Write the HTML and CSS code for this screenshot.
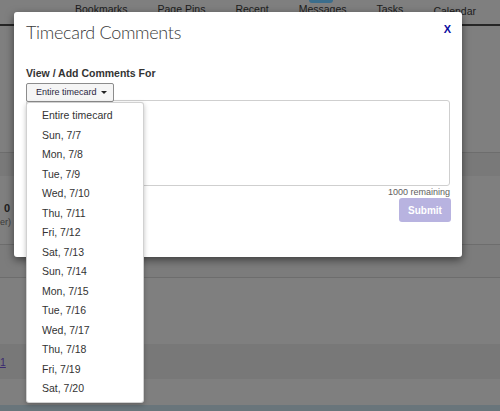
FILE: index.html
```html
<!DOCTYPE html>
<html>
<head>
<meta charset="utf-8">
<link rel="stylesheet" href="styles.css">
</head>
<body>
<div class="page">
  <nav class="nav">
    <span class="nav-item">Bookmarks</span>
    <span class="nav-item">Page Pins</span>
    <span class="nav-item">Recent</span>
    <span class="nav-item has-badge">Messages<span class="badge"></span></span>
    <span class="nav-item">Tasks</span>
    <span class="nav-item cal">Calendar</span>
  </nav>
  <div class="row row1"></div>
  <div class="band band1"></div>
  <div class="row row3">
    <div class="total">0</div>
    <div class="note">er)</div>
  </div>
  <div class="row row4"></div>
  <div class="row row5"></div>
  <div class="band band2"><a class="link" href="#">1</a></div>
  <div class="row row7"></div>
  <div class="footer"></div>
</div>

<div class="modal">
  <div class="modal-header">
    <h1 class="modal-title">Timecard Comments</h1>
    <span class="close">X</span>
  </div>
  <div class="label">View / Add Comments For</div>
  <div class="dropdown">
    <button class="dd-btn"><span>Entire timecard</span><span class="caret"></span></button>
    <ul class="dd-menu">
      <li>Entire timecard</li>
      <li>Sun, 7/7</li>
      <li>Mon, 7/8</li>
      <li>Tue, 7/9</li>
      <li>Wed, 7/10</li>
      <li>Thu, 7/11</li>
      <li>Fri, 7/12</li>
      <li>Sat, 7/13</li>
      <li>Sun, 7/14</li>
      <li>Mon, 7/15</li>
      <li>Tue, 7/16</li>
      <li>Wed, 7/17</li>
      <li>Thu, 7/18</li>
      <li>Fri, 7/19</li>
      <li>Sat, 7/20</li>
    </ul>
  </div>
  <textarea class="comment"></textarea>
  <div class="remaining">1000 remaining</div>
  <button class="submit">Submit</button>
</div>
</body>
</html>
```
FILE: styles.css
```css
* { box-sizing: border-box; }
html, body { margin: 0; padding: 0; }
body {
  width: 500px;
  height: 411px;
  overflow: hidden;
  background: #7f7f7f;
  font-family: "Liberation Sans", Arial, sans-serif;
  position: relative;
}
.page { display: flex; flex-direction: column; height: 411px; }
.nav {
  height: 26px;
  border-bottom: 2px solid #262626;
  display: flex;
  gap: 30px;
  padding: 2px 0 0 75px;
  font-size: 10.5px;
  line-height: 14px;
  color: #1c1c1c;
}
.nav-item { position: relative; white-space: nowrap; }
.nav-item.cal { margin-top: 2px; }
.badge {
  position: absolute;
  left: 10px;
  top: -2px;
  width: 24px;
  height: 3px;
  background: #3a6d8c;
  border-radius: 0 0 3px 3px;
}
.row { background: #7f7f7f; }
.row1 { height: 127px; border-bottom: 1px solid #6d6d6d; }
.band1 { height: 23px; background: #797979; }
.row3 { height: 69px; border-bottom: 1px solid #6d6d6d; padding-top: 25px; }
.row4 { height: 33px; border-bottom: 1px solid #6d6d6d; background: #7c7c7c; }
.row5 { height: 66px; }
.band2 { height: 35px; background: #787878; padding-top: 12px; }
.row7 { height: 26px; }
.footer { flex: 1; background: #69757b; }
.total { padding-left: 4px; font-size: 11px; line-height: 14px; color: #202020; font-weight: bold; }
.note { font-size: 9px; line-height: 12px; color: #3a3a3a; margin-top: 1px; white-space: nowrap; }
.link { display: block; width: 6px; font-size: 10.5px; color: #3b2a70; text-decoration: underline; line-height: 12px; }

.modal {
  position: absolute;
  left: 14px;
  top: 12px;
  width: 448px;
  height: 245px;
  background: #fff;
  border-radius: 3px;
  box-shadow: 0 3px 8px rgba(0,0,0,0.5);
  padding: 8px 12px 0 12px;
}
.modal-header { display: flex; justify-content: space-between; align-items: flex-start; }
.modal-title {
  margin: 0;
  font-family: Lato, "Open Sans", sans-serif;
  font-weight: 300;
  font-size: 18px;
  letter-spacing: -0.3px;
  line-height: 24px;
  color: #3a3a3a;
}
.close {
  margin-top: 3px;
  margin-right: -1px;
  font-size: 11px;
  line-height: 13px;
  font-weight: bold;
  color: #0a0aa0;
}
.label {
  margin-top: 23px;
  font-size: 10.5px;
  line-height: 13px;
  font-weight: bold;
  color: #333;
}
.dropdown { position: relative; margin-top: 1px; height: 19px; }
.dd-btn {
  display: inline-flex;
  align-items: center;
  gap: 4px;
  height: 19px;
  margin: 0;
  padding: 0 6px 0 9px;
  border: 1px solid #8c8c8c;
  border-radius: 2px;
  background: #f5f5f5;
  font-family: "Liberation Sans", Arial, sans-serif;
  font-size: 9px;
  color: #2a2540;
}
.caret {
  width: 0; height: 0;
  border-top: 3px solid #222;
  border-left: 3px solid transparent;
  border-right: 3px solid transparent;
}
.dd-menu {
  position: absolute;
  left: 0;
  top: 21px;
  width: 118px;
  margin: 0;
  padding: 3px 0;
  list-style: none;
  background: #fff;
  border: 1px solid rgba(0,0,0,0.18);
  border-radius: 3px;
  box-shadow: 0 2px 5px rgba(0,0,0,0.25);
  z-index: 2;
}
.dd-menu li {
  height: 19.5px;
  line-height: 19.5px;
  padding-left: 15px;
  font-size: 10.5px;
  color: #333;
  white-space: nowrap;
}
.comment {
  display: block;
  width: 424px;
  height: 86px;
  margin: 0;
  border: 1px solid #cfcfcf;
  border-radius: 3px;
  resize: none;
  background: #fff;
}
.remaining {
  margin-top: 1px;
  text-align: right;
  font-size: 9px;
  line-height: 11px;
  color: #5e5e5e;
}
.submit {
  display: block;
  margin: 0 -1px 0 auto;
  width: 52px;
  height: 24px;
  padding: 0;
  border: 0;
  border-radius: 3px;
  background: #b8b3e0;
  color: #fff;
  font-family: "Liberation Sans", Arial, sans-serif;
  font-weight: bold;
  font-size: 10px;
}
```
